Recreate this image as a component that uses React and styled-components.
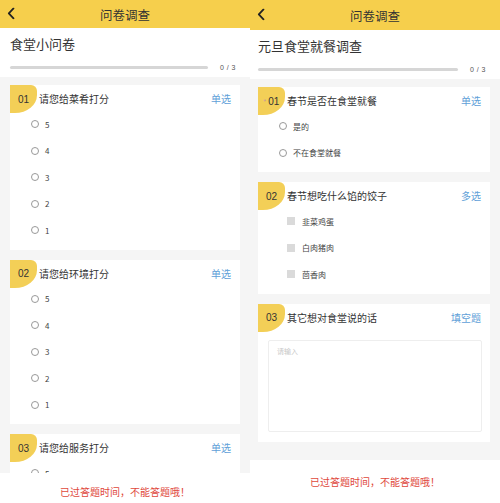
import styled, { createGlobalStyle } from "styled-components";

const GlobalStyle = createGlobalStyle`
  html, body {
    margin: 0;
    padding: 0;
    background: #fff;
    font-family: "Noto Sans CJK SC", "Noto Sans", sans-serif;
  }
`;

const surveys = [
  {
    title: "食堂小问卷",
    headerHeight: 28,
    side: [10, 10],
    footer: { height: 30, top: 11 },
    questions: [
      { no: "01", text: "请您给菜肴打分", type: "单选", kind: "radio", options: ["5", "4", "3", "2", "1"] },
      { no: "02", text: "请您给环境打分", type: "单选", kind: "radio", options: ["5", "4", "3", "2", "1"] },
      { no: "03", text: "请您给服务打分", type: "单选", kind: "radio", options: ["5", "4", "3", "2", "1"] },
    ],
  },
  {
    title: "元旦食堂就餐调查",
    headerHeight: 30,
    side: [8, 10],
    footer: { height: 43, top: 14 },
    questions: [
      { no: "01", required: true, text: "春节是否在食堂就餐", type: "单选", kind: "radio", options: ["是的", "不在食堂就餐"] },
      { no: "02", text: "春节想吃什么馅的饺子", type: "多选", kind: "check", options: ["韭菜鸡蛋", "白肉猪肉", "茴香肉"] },
      { no: "03", text: "其它想对食堂说的话", type: "填空题", kind: "text" },
    ],
  },
];

const Question = ({ q }) => (
  <Card>
    <CardHead>
      <Badge>
        {q.required && <Star>*</Star>}
        {q.no}
      </Badge>
      <QTitle>{q.text}</QTitle>
      <QType>{q.type}</QType>
    </CardHead>
    {q.kind === "text" ? (
      <Answer placeholder="请输入" />
    ) : (
      <Options>
        {q.options.map((o) => (
          <Option key={o} $kind={q.kind}>
            {q.kind === "radio" ? <Radio /> : <Check />}
            {o}
          </Option>
        ))}
      </Options>
    )}
  </Card>
);

const Phone = ({ s }) => (
  <Screen>
    <Header $h={s.headerHeight}>
      <Back width="8" height="12" viewBox="0 0 8 12">
        <path d="M6.5 1 L1.8 6 L6.5 11" fill="none" stroke="#222" strokeWidth="1.8" strokeLinecap="round" strokeLinejoin="round" />
      </Back>
      问卷调查
    </Header>
    <TitleBlock $l={s.side[0]}>
      <Title>{s.title}</Title>
      <ProgressRow>
        <Bar />
        <Count>0 / 3</Count>
      </ProgressRow>
    </TitleBlock>
    <Body $l={s.side[0]} $r={s.side[1]}>
      {s.questions.map((q) => (
        <Question key={q.no} q={q} />
      ))}
    </Body>
    <Footer $h={s.footer.height} $top={s.footer.top}>已过答题时间，不能答题哦！</Footer>
  </Screen>
);

const App = () => (
  <>
    <GlobalStyle />
    <Page>
      {surveys.map((s) => (
        <Phone key={s.title} s={s} />
      ))}
    </Page>
  </>
);

const Page = styled.div`
  display: grid;
  grid-template-columns: 250px 250px;
  width: 500px;
  height: 503px;
  overflow: hidden;
`;

const Screen = styled.div`
  display: flex;
  flex-direction: column;
  height: 503px;
  overflow: hidden;
  background: #fff;
`;

const Header = styled.div`
  position: relative;
  flex: none;
  height: ${(p) => p.$h}px;
  background: #f6cf4c;
  display: flex;
  align-items: center;
  justify-content: center;
  font-size: 12.5px;
  color: #333;
`;

const Back = styled.svg`
  position: absolute;
  left: 7px;
  top: 50%;
  transform: translateY(-55%);
`;

const TitleBlock = styled.div`
  flex: none;
  height: 49px;
  box-sizing: border-box;
  padding: 6px 14px 0 ${(p) => p.$l}px;
`;

const Title = styled.div`
  font-size: 13px;
  line-height: 20px;
  color: #333;
`;

const ProgressRow = styled.div`
  display: flex;
  align-items: center;
  margin-top: 10px;
`;

const Bar = styled.div`
  flex: 1;
  height: 3px;
  border-radius: 2px;
  background: #d6d6d6;
`;

const Count = styled.span`
  margin-left: 12px;
  font-size: 7px;
  color: #555;
  font-family: "Liberation Sans", sans-serif;
  letter-spacing: 0.5px;
`;

const Body = styled.div`
  flex: 1;
  min-height: 0;
  overflow: hidden;
  background: #f5f5f5;
  padding: 8px ${(p) => p.$r}px 0 ${(p) => p.$l}px;
  display: flex;
  flex-direction: column;
  gap: 10px;
`;

const Card = styled.div`
  flex: none;
  background: #fff;
  padding-bottom: 6px;
`;

const CardHead = styled.div`
  display: flex;
  align-items: flex-start;
  height: 26px;
`;

const Badge = styled.div`
  flex: none;
  width: 27px;
  height: 28px;
  box-sizing: border-box;
  display: flex;
  align-items: center;
  justify-content: center;
  background: #f3cf57;
  border-radius: 0 6px 22px 0 / 0 6px 18px 0;
  font-size: 10px;
  color: #333;
  font-family: "Liberation Sans", sans-serif;
  position: relative;
  z-index: 1;
`;

const Star = styled.span`
  color: #c99;
  font-size: 7px;
  margin-right: 2px;
`;

const QTitle = styled.div`
  flex: 1;
  margin-left: 2px;
  line-height: 28px;
  font-size: 10px;
  color: #333;
`;

const QType = styled.div`
  margin-right: 9px;
  line-height: 28px;
  font-size: 10px;
  color: #5f9fd8;
`;

const Options = styled.div`
  display: flex;
  flex-direction: column;
`;

const Option = styled.div`
  display: flex;
  align-items: center;
  height: 26.5px;
  padding-left: ${(p) => (p.$kind === "radio" ? 21 : 29)}px;
  font-size: 8px;
  color: #444;
`;

const Radio = styled.span`
  width: 6px;
  height: 6px;
  border: 1px solid #999;
  border-radius: 50%;
  margin-right: 6px;
`;

const Check = styled.span`
  width: 8px;
  height: 8px;
  background: #dadada;
  margin-right: 7px;
`;

const Answer = styled.textarea`
  display: block;
  box-sizing: border-box;
  width: calc(100% - 18px);
  height: 92px;
  margin: 10px 8px 4px 10px;
  border: 1px solid #eeeeee;
  border-radius: 2px;
  resize: none;
  padding: 5px 8px;
  font-family: inherit;
  font-size: 7px;
  color: #333;
  &::placeholder {
    color: #c8c8c8;
  }
`;

const Footer = styled.div`
  flex: none;
  height: ${(p) => p.$h}px;
  box-sizing: border-box;
  padding-top: ${(p) => p.$top}px;
  background: #fff;
  text-align: center;
  font-size: 10px;
  color: #e0483c;
`;

export default App;
